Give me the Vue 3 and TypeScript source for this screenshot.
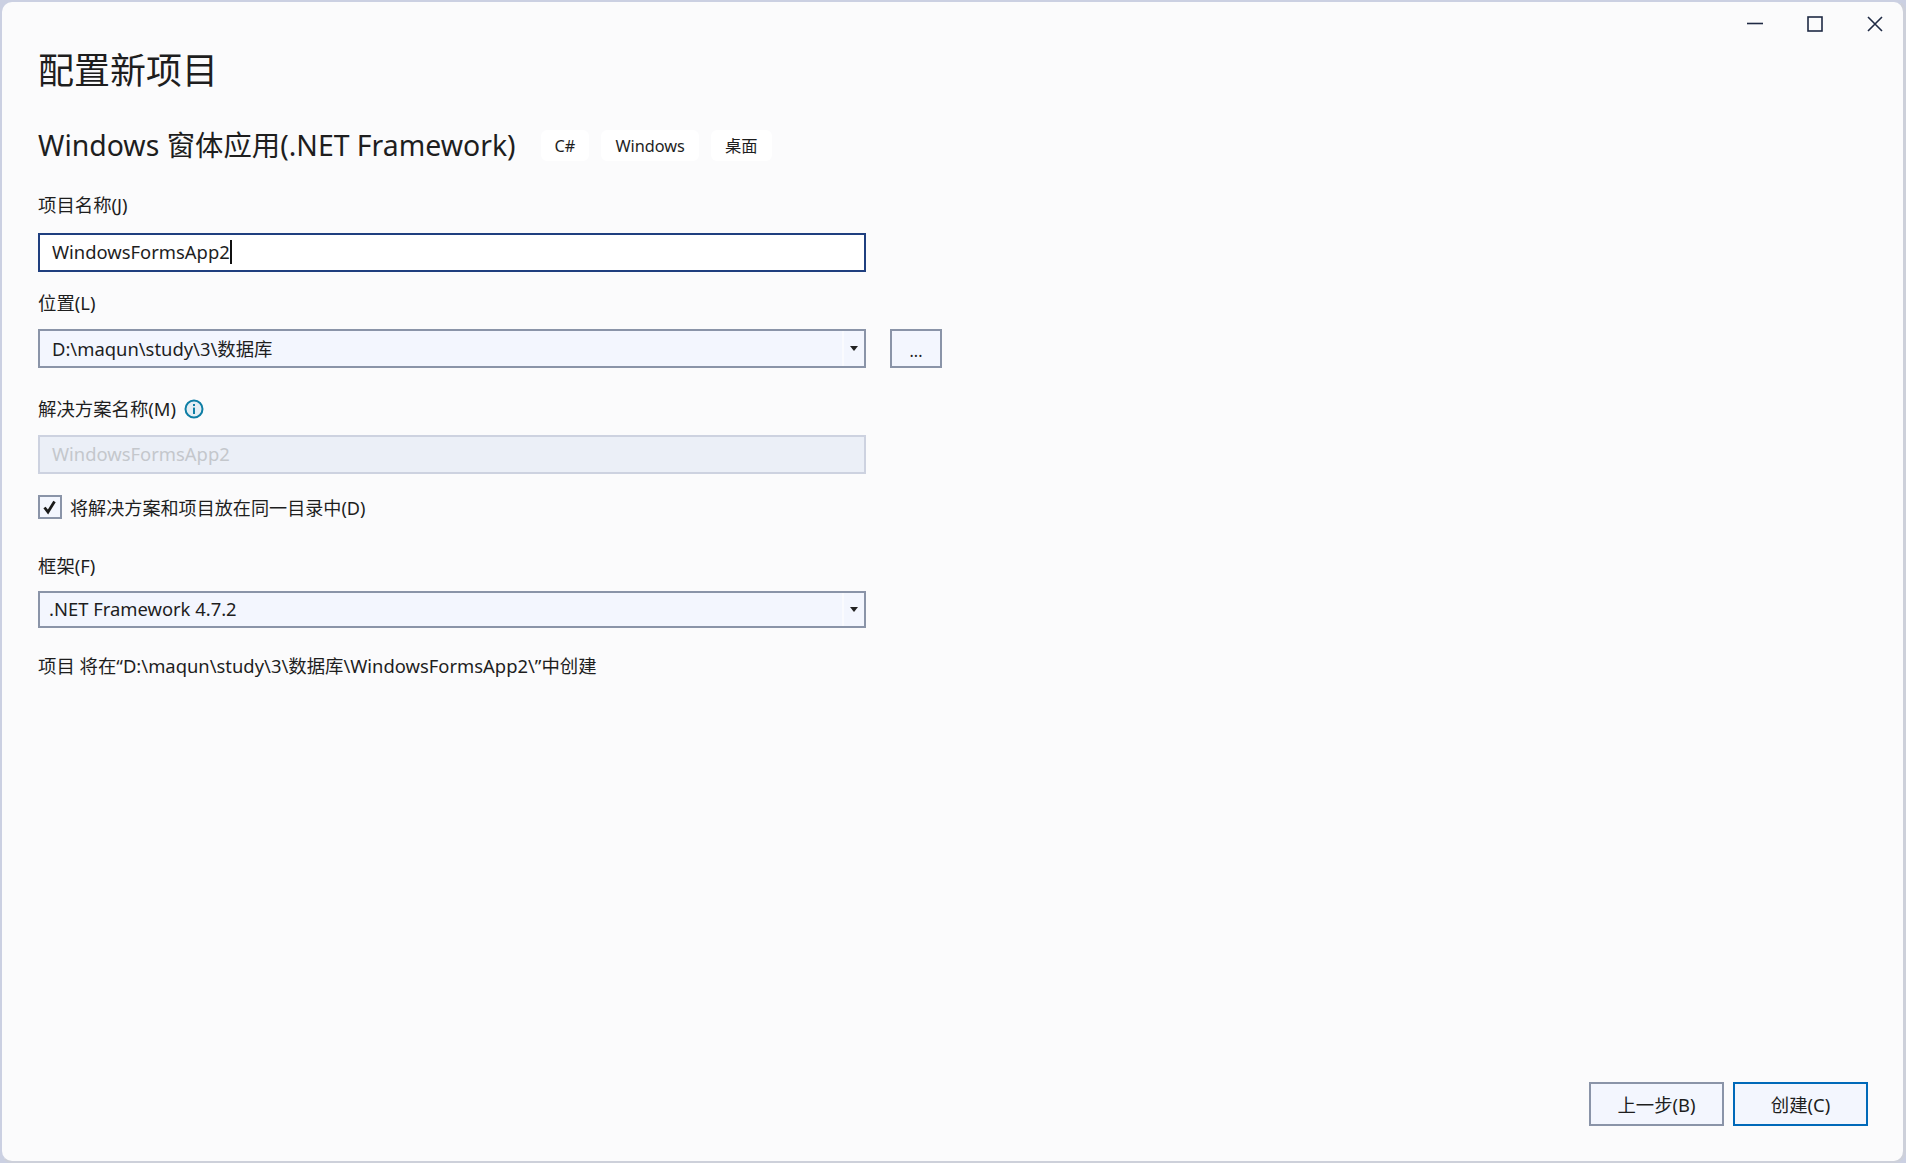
<script setup lang="ts">
// Visual Studio "configure new project" dialog, static mock
const tags: string[] = ['C#', 'Windows', '桌面']
const projectName = 'WindowsFormsApp2'
const location = 'D:\\maqun\\study\\3\\数据库'
const framework = '.NET Framework 4.7.2'
const resultPath = '项目 将在“D:\\maqun\\study\\3\\数据库\\WindowsFormsApp2\\”中创建'
</script>

<template>
  <div class="window">
    <div class="caption">
      <button class="cap-btn" aria-label="最小化">
        <svg width="16" height="16" viewBox="0 0 16 16"><path d="M0 7.5H16" /></svg>
      </button>
      <button class="cap-btn" aria-label="最大化">
        <svg width="16" height="16" viewBox="0 0 16 16"><rect x="1" y="1" width="14" height="14" /></svg>
      </button>
      <button class="cap-btn" aria-label="关闭">
        <svg width="16" height="16" viewBox="0 0 16 16"><path d="M1 1L15 15M15 1L1 15" /></svg>
      </button>
    </div>

    <main class="content">
      <h1>配置新项目</h1>

      <div class="template-row">
        <h2>Windows 窗体应用(.NET Framework)</h2>
        <ul class="tags">
          <li v-for="tag in tags" :key="tag">{{ tag }}</li>
        </ul>
      </div>

      <label class="field-label first">项目名称(J)</label>
      <div class="field focus">
        <span>{{ projectName }}</span><i class="caret"></i>
      </div>

      <label class="field-label second">位置(L)</label>
      <div class="location-row">
        <div class="field combo">
          <span>{{ location }}</span>
          <span class="arrow"></span>
        </div>
        <button class="browse">...</button>
      </div>

      <div class="field-label third">
        解决方案名称(M)
        <svg class="info" width="20" height="20" viewBox="0 0 20 20">
          <circle cx="10" cy="10" r="8.5" />
          <rect x="9" y="8.6" width="2" height="6.4" />
          <rect x="9" y="5" width="2" height="2" />
        </svg>
      </div>
      <div class="field disabled">{{ projectName }}</div>

      <div class="check-row">
        <span class="checkbox">
          <svg width="20" height="20" viewBox="0 0 20 20"><path d="M4.5 10.5L8 15L14.5 4.5" /></svg>
        </span>
        <span>将解决方案和项目放在同一目录中(D)</span>
      </div>

      <label class="field-label fourth">框架(F)</label>
      <div class="field combo framework">
        <span>{{ framework }}</span>
        <span class="arrow"></span>
      </div>

      <p class="result">{{ resultPath }}</p>
    </main>

    <footer class="footer">
      <button class="action">上一步(B)</button>
      <button class="action primary">创建(C)</button>
    </footer>
  </div>
</template>

<style>
html,
body {
  margin: 0;
  background: #cbd0e2;
}
</style>

<style scoped>
.window {
  box-sizing: border-box;
  width: 1906px;
  height: 1163px;
  display: flex;
  flex-direction: column;
  background: #fbfbfc;
  border-style: solid;
  border-width: 2px 3px 2px 2px;
  border-color: #cbd0e2 #cdd0da #cdd0da #cbd0e2;
  border-radius: 12px;
  color: #1e1e1e;
  font-family: "Noto Sans", "Noto Sans CJK SC", sans-serif;
  font-size: 18.4px;
}

/* title bar buttons */
.caption {
  height: 45px;
  display: flex;
  justify-content: flex-end;
  padding-top: 14px;
  margin-right: -2px;
  box-sizing: border-box;
}
.cap-btn {
  width: 60px;
  height: 16px;
  padding: 0;
  border: 0;
  background: none;
  display: flex;
  justify-content: center;
}
.cap-btn svg {
  fill: none;
  stroke: #1f2a44;
  stroke-width: 1.6;
}

.content {
  padding: 0 36px;
  flex: 1;
}
h1 {
  margin: 0;
  font-size: 36px;
  font-weight: 400;
  line-height: 48px;
}
.template-row {
  display: flex;
  align-items: center;
  margin-top: 35px;
  height: 31px;
}
h2 {
  margin: 0;
  font-size: 28.4px;
  font-weight: 400;
  line-height: 31px;
}
.tags {
  display: flex;
  gap: 12px;
  list-style: none;
  margin: 0 0 0 25px;
  padding: 0;
}
.tags li {
  height: 31px;
  line-height: 33px;
  padding: 0 14px;
  background: #fff;
  border-radius: 6px;
  font-size: 16.3px;
}

.field-label {
  display: flex;
  align-items: center;
  height: 24px;
  line-height: 24px;
}
.first { margin: 32px 0 16px; }
.second { margin: 19px 0 14px; }
.third { margin: 29px 0 14px; gap: 8px; }
.fourth { margin: 35px 0 13px; }

.field {
  box-sizing: border-box;
  width: 828px;
  height: 39px;
  padding: 0 12px 2px;
  display: flex;
  align-items: center;
  border: 2px solid #8a94a8;
  background: #f3f6fe;
}
.focus {
  border-color: #1f3f7f;
  background: #fff;
}
.caret {
  width: 2px;
  height: 24px;
  background: #111;
}
.disabled {
  border-color: #cdd2e0;
  background: #ebeff7;
  color: #c4c7cc;
}
.location-row {
  display: flex;
  gap: 24px;
}
.combo {
  position: relative;
  justify-content: space-between;
  padding-right: 0;
  padding-bottom: 0;
}
.combo > span:first-child {
  margin-bottom: 2px;
}
.framework {
  height: 37px;
  padding-left: 9px;
}
.arrow {
  width: 20px;
  height: 100%;
  border-left: 2px solid #fafbfe;
  display: flex;
  align-items: center;
  justify-content: center;
}
.arrow::after {
  content: "";
  border-top: 5px solid #222;
  border-left: 4px solid transparent;
  border-right: 4px solid transparent;
}
.browse {
  box-sizing: border-box;
  width: 52px;
  height: 39px;
  border: 2px solid #8a94a8;
  background: #f3f6fe;
  color: #1e1e1e;
  font: inherit;
  font-size: 16px;
  padding: 4px 0 0;
}
.info {
  fill: #0e7ea5;
}
.info circle {
  fill: #e4eef4;
  stroke: #0e7ea5;
  stroke-width: 2;
}

.check-row {
  display: flex;
  align-items: center;
  gap: 8px;
  margin-top: 21px;
  height: 24px;
  font-size: 18.1px;
}
.checkbox {
  box-sizing: border-box;
  width: 24px;
  height: 24px;
  border: 2px solid #8a94a8;
  background: #f3f6fe;
  display: flex;
}
.checkbox svg {
  fill: none;
  stroke: #1a1a1a;
  stroke-width: 2.8;
}

.result {
  margin: 26px 0 0;
  height: 24px;
  line-height: 24px;
}

.footer {
  display: flex;
  justify-content: flex-end;
  gap: 9px;
  padding: 0 35px 35px 0;
}
.action {
  box-sizing: border-box;
  width: 135px;
  height: 44px;
  border: 2px solid #8a94a8;
  background: #f3f6fe;
  color: #1e1e1e;
  font: inherit;
  padding: 0;
}
.primary {
  border-color: #0069b9;
}
</style>
